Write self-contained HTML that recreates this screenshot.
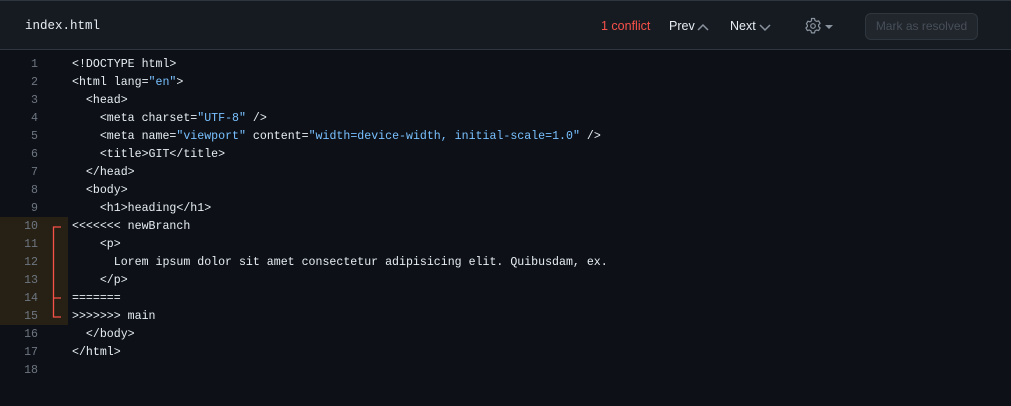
<!DOCTYPE html>
<html><head><style>
body{margin:0;width:1011px;height:406px;background:#0d1117;overflow:hidden;font-family:"Liberation Sans",sans-serif;position:relative}
.hdr{position:absolute;left:0;top:0;width:1011px;height:50px;background:#161b22;border-top:1px solid #30363d;border-bottom:1px solid #30363d;box-sizing:border-box}
.fn{position:absolute;left:25px;top:18px;font:12.5px "Liberation Mono",monospace;color:#e6edf3}
.t{position:absolute;top:18px;font-size:12.5px;color:#e6edf3}
.btn{position:absolute;left:865px;top:12px;width:113px;height:27px;border:1px solid #30363d;border-radius:6px;background:#21262d;box-sizing:border-box;color:#484f58;font-size:12px;text-align:center;line-height:25px}
.code{position:absolute;left:0;top:56px;font:11.6px/18px "Liberation Mono",monospace;color:#e6edf3}
.ln{position:absolute;left:0;width:38px;text-align:right;color:#6e7681}
.tx{position:absolute;left:72px;white-space:pre}
.s{color:#79c0ff}
.hl{position:absolute;left:0;top:217px;width:68px;height:108px;background:#272115}
</style></head><body>
<div class="hdr">
<div class="fn">index.html</div>
<div class="t" style="left:601px;color:#f85149">1 conflict</div>
<div class="t" style="left:669px">Prev</div>
<svg style="position:absolute;left:697px;top:22px" width="12" height="9"><path d="M1 7L6 2L11 7" stroke="#8b949e" stroke-width="1.5" fill="none"/></svg>
<div class="t" style="left:730px">Next</div>
<svg style="position:absolute;left:759px;top:22px" width="12" height="9"><path d="M1 2L6 7L11 2" stroke="#8b949e" stroke-width="1.5" fill="none"/></svg>
<svg style="position:absolute;left:805px;top:16px" width="30" height="18" viewBox="0 0 30 18"><path d="M6.5 1.5h3l.5 2 1.6.9 2-.6 1.5 2.6-1.5 1.4v1.8l1.5 1.4-1.5 2.6-2-.6-1.6.9-.5 2h-3l-.5-2-1.6-.9-2 .6-1.5-2.6 1.5-1.4V8.2L1.4 6.8l1.5-2.6 2 .6 1.6-.9z" stroke="#8b949e" stroke-width="1.2" fill="none" stroke-linejoin="round"/><circle cx="8" cy="9" r="2.3" stroke="#8b949e" stroke-width="1.2" fill="none"/><path d="M20 8h8l-4 4z" fill="#8b949e"/></svg>
<div class="btn">Mark as resolved</div>
</div>
<div class="hl"></div>
<svg style="position:absolute;left:50px;top:217px" width="20" height="110"><path d="M11 10H3.5V100H11M3.5 81H11" stroke="#f85149" stroke-width="1.3" fill="none"/></svg>
<div class="code">
<div class="ln" style="top:0">1</div><div class="tx" style="top:0">&lt;!DOCTYPE html&gt;</div>
<div class="ln" style="top:18px">2</div><div class="tx" style="top:18px">&lt;html lang=<span class="s">"en"</span>&gt;</div>
<div class="ln" style="top:36px">3</div><div class="tx" style="top:36px">  &lt;head&gt;</div>
<div class="ln" style="top:54px">4</div><div class="tx" style="top:54px">    &lt;meta charset=<span class="s">"UTF-8"</span> /&gt;</div>
<div class="ln" style="top:72px">5</div><div class="tx" style="top:72px">    &lt;meta name=<span class="s">"viewport"</span> content=<span class="s">"width=device-width, initial-scale=1.0"</span> /&gt;</div>
<div class="ln" style="top:90px">6</div><div class="tx" style="top:90px">    &lt;title&gt;GIT&lt;/title&gt;</div>
<div class="ln" style="top:108px">7</div><div class="tx" style="top:108px">  &lt;/head&gt;</div>
<div class="ln" style="top:126px">8</div><div class="tx" style="top:126px">  &lt;body&gt;</div>
<div class="ln" style="top:144px">9</div><div class="tx" style="top:144px">    &lt;h1&gt;heading&lt;/h1&gt;</div>
<div class="ln" style="top:162px">10</div><div class="tx" style="top:162px">&lt;&lt;&lt;&lt;&lt;&lt;&lt; newBranch</div>
<div class="ln" style="top:180px">11</div><div class="tx" style="top:180px">    &lt;p&gt;</div>
<div class="ln" style="top:198px">12</div><div class="tx" style="top:198px">      Lorem ipsum dolor sit amet consectetur adipisicing elit. Quibusdam, ex.</div>
<div class="ln" style="top:216px">13</div><div class="tx" style="top:216px">    &lt;/p&gt;</div>
<div class="ln" style="top:234px">14</div><div class="tx" style="top:234px">=======</div>
<div class="ln" style="top:252px">15</div><div class="tx" style="top:252px">&gt;&gt;&gt;&gt;&gt;&gt;&gt; main</div>
<div class="ln" style="top:270px">16</div><div class="tx" style="top:270px">  &lt;/body&gt;</div>
<div class="ln" style="top:288px">17</div><div class="tx" style="top:288px">&lt;/html&gt;</div>
<div class="ln" style="top:306px">18</div>
</div>
</body></html>
